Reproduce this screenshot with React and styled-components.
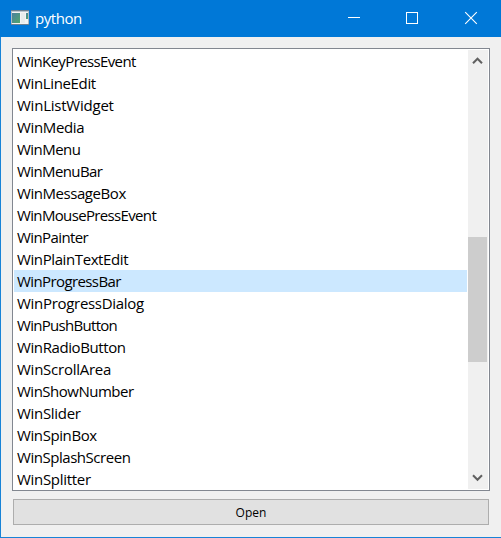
import React from "react";
import styled, { createGlobalStyle } from "styled-components";

const GlobalStyle = createGlobalStyle`
  * { box-sizing: border-box; }
  body { margin: 0; overflow: hidden; }
`;

const Window = styled.div`
  width: 501px;
  height: 538px;
  display: flex;
  flex-direction: column;
  background: #f0f0f0;
  border-left: 1px solid #1883d7;
  border-bottom: 1px solid #1883d7;
  font-family: "Open Sans", "Noto Sans", sans-serif;
  color: #000;
`;

const TitleBar = styled.header`
  height: 37px;
  flex: none;
  display: flex;
  background: #0078d7;
  color: #fff;
  margin-left: -1px;
`;

const AppIcon = styled.svg`
  margin: 9px 5px 0 10px;
  flex: none;
`;

const Title = styled.h1`
  margin: 0;
  flex: 1;
  font-size: 15px;
  font-weight: 400;
  line-height: 37px;
  letter-spacing: -0.45px;
`;

const Controls = styled.div`
  display: flex;
`;

const ControlButton = styled.button`
  width: ${(p) => p.$width}px;
  height: 37px;
  padding: 0;
  border: 0;
  background: transparent;
  svg { display: block; }
`;

const Body = styled.main`
  flex: 1;
  display: flex;
  flex-direction: column;
  padding: 11px 11px 12px 11px;
  gap: 8px;
`;

const ListFrame = styled.div`
  height: 443px;
  display: flex;
  padding: 1px;
  background: #fff;
  border: 1px solid #828790;
`;

const List = styled.ul`
  flex: 1;
  margin: 0 1px 0 0;
  padding: 0;
  list-style: none;
  overflow: hidden;
`;

const Item = styled.li`
  height: 22px;
  padding-left: 3px;
  font-size: 15px;
  line-height: 23px;
  letter-spacing: ${(p) => p.$spacing}px;
  white-space: nowrap;
  background: ${(p) => (p.$selected ? "#cce8ff" : "transparent")};
`;

const ScrollBar = styled.div`
  width: 20px;
  flex: none;
  display: flex;
  flex-direction: column;
  background: #f0f0f0;
`;

const Arrow = styled.svg`
  width: 20px;
  height: 20px;
  flex: none;
`;

const Track = styled.div`
  flex: 1;
  padding-top: 167px;
`;

const Thumb = styled.div`
  width: 19px;
  height: 125px;
  background: #cdcdcd;
`;

const OpenButton = styled.button`
  height: 26px;
  margin: 0 1px;
  padding: 1px 0 0;
  background: #e1e1e1;
  border: 1px solid #adadad;
  font: 12px/23px "Open Sans", "Noto Sans", sans-serif;
  color: #000;
`;

const ITEMS = [
  ["WinKeyPressEvent", -0.62],
  ["WinLineEdit", -0.35],
  ["WinListWidget", -0.23],
  ["WinMedia", -0.35],
  ["WinMenu", -0.55],
  ["WinMenuBar", -0.6],
  ["WinMessageBox", -0.44],
  ["WinMousePressEvent", -0.65],
  ["WinPainter", -0.6],
  ["WinPlainTextEdit", -0.4],
  ["WinProgressBar", -0.6],
  ["WinProgressDialog", -0.3],
  ["WinPushButton", -0.7],
  ["WinRadioButton", -0.4],
  ["WinScrollArea", -0.25],
  ["WinShowNumber", -0.5],
  ["WinSlider", -0.3],
  ["WinSpinBox", -0.4],
  ["WinSplashScreen", -0.46],
  ["WinSplitter", -0.3],
];

export default function App() {
  return (
    <>
      <GlobalStyle />
      <Window>
        <TitleBar>
          <AppIcon width="20" height="18" viewBox="0 0 20 18">
            <defs>
              <linearGradient id="screen" x1="0" y1="0" x2="1" y2="1">
                <stop offset="0" stopColor="#4b80a0" />
                <stop offset="1" stopColor="#51a66c" />
              </linearGradient>
            </defs>
            <rect x="1" y="1" width="18" height="15" fill="#6b7f91" />
            <rect x="1.5" y="2" width="17" height="13" fill="#f3f4f4" />
            <rect x="1.5" y="2" width="17" height="1" fill="#b8c4cd" />
            <rect x="2" y="4" width="8" height="10" fill="url(#screen)" />
            <rect x="11" y="4" width="4" height="10" fill="#e8ecec" />
            <rect x="16" y="4" width="2" height="6" fill="url(#screen)" />
          </AppIcon>
          <Title>python</Title>
          <Controls>
            <ControlButton $width={58} aria-label="Minimize">
              <svg width="58" height="37"><path d="M18 17.5H30" stroke="#fff" /></svg>
            </ControlButton>
            <ControlButton $width={58} aria-label="Maximize">
              <svg width="58" height="37"><rect x="18.5" y="12.5" width="11" height="11" fill="none" stroke="#fff" /></svg>
            </ControlButton>
            <ControlButton $width={55} aria-label="Close">
              <svg width="55" height="37"><path d="M19.2 12.2L30.8 23.8M30.8 12.2L19.2 23.8" stroke="#fff" strokeWidth="1.1" /></svg>
            </ControlButton>
          </Controls>
        </TitleBar>
        <Body>
          <ListFrame>
            <List>
              {ITEMS.map(([name, spacing]) => (
                <Item key={name} $spacing={spacing} $selected={name === "WinProgressBar"}>
                  {name}
                </Item>
              ))}
            </List>
            <ScrollBar>
              <Arrow viewBox="0 0 20 20"><path d="M5 13.2L9.5 8.7L14 13.2" fill="none" stroke="#606060" strokeWidth="2" /></Arrow>
              <Track><Thumb /></Track>
              <Arrow viewBox="0 0 20 20"><path d="M5 6.3L9.5 10.8L14 6.3" fill="none" stroke="#606060" strokeWidth="2" /></Arrow>
            </ScrollBar>
          </ListFrame>
          <OpenButton>Open</OpenButton>
        </Body>
      </Window>
    </>
  );
}
